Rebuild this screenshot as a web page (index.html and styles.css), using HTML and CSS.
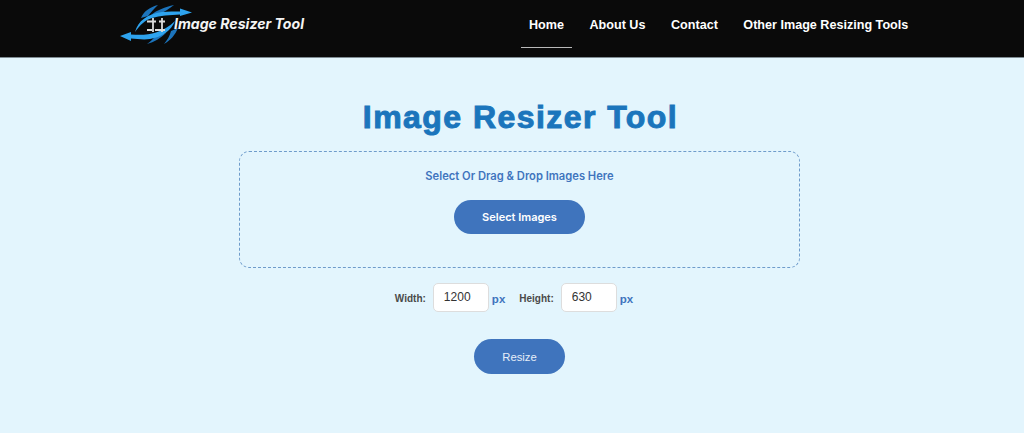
FILE: index.html
```html
<!DOCTYPE html>
<html lang="en">
<head>
<meta charset="utf-8">
<title>Image Resizer Tool</title>
<link rel="stylesheet" href="styles.css">
</head>
<body>
<header class="site-header">
  <a class="logo" href="#">
    <svg class="logo-mark" width="72" height="48" viewBox="0 0 72 48" aria-hidden="true">
      <g fill="#1c74bc">
        <path d="M21 18C24 11 30 7 38 5C34 9 31 12 28 16Z"/>
        <path d="M31 15C37 10 45 7 54 5C49 9 44 12 40 14Z"/>
        <path d="M27 44C34 42 41 38 46 33L36 36C33 39 31 41 27 44Z"/>
        <path d="M44 44C51 40 55 35 58 28L51 31C50 36 47 40 44 44Z"/>
      </g>
      <path d="M15 32C18 21 27 14 42 12C48 11.500 55 11.500 60 11.500L60 8.500L72 12.500L60 16L60 14.500C50 15 40 15.500 32 18C25 20 20 25 15 32Z" fill="#2ea3ee"/>
      <path d="M55 21C51 31 42 37 30 39C24 40 17 39 11 38.500L11 41L0 36L11 32L11 34.500C20 35 29 35 36 32.500C43 30 49 27 55 21Z" fill="#2ea3ee"/>
      <g stroke="#dcdcdc" stroke-width="1.800" fill="none">
        <path d="M27 21.500H36M39 21.500H45M27 30H32M35 30H45"/>
        <path d="M33 18V32M42 18V32"/>
      </g>
    </svg>
    <span class="logo-text">Image Resizer Tool</span>
  </a>
  <nav class="main-nav">
    <a class="nav-link is-active" href="#">Home</a>
    <a class="nav-link" href="#">About Us</a>
    <a class="nav-link" href="#">Contact</a>
    <a class="nav-link" href="#">Other Image Resizing Tools</a>
  </nav>
</header>
<main class="tool">
  <h1 class="tool-title">Image Resizer Tool</h1>
  <section class="dropzone">
    <p class="dropzone-text">Select Or Drag &amp; Drop Images Here</p>
    <button class="select-btn" type="button">Select Images</button>
  </section>
  <div class="dimensions">
    <label class="dim-label" for="w">Width:</label>
    <input class="dim-input" id="w" type="text" value="1200">
    <span class="dim-unit">px</span>
    <label class="dim-label dim-label-second" for="h">Height:</label>
    <input class="dim-input" id="h" type="text" value="630">
    <span class="dim-unit dim-unit-last">px</span>
  </div>
  <button class="resize-btn" type="button">Resize</button>
</main>
</body>
</html>
```
FILE: styles.css
```css
* { box-sizing: border-box; }
html, body { margin: 0; height: 100%; }
body {
  background: #e3f5fd;
  font-family: "Liberation Sans", Arial, sans-serif;
  overflow: hidden;
}
.site-header {
  height: 58px;
  background: #0a0a0a;
  border-bottom: 1px solid #7f8c93;
  display: flex;
  align-items: flex-start;
  padding-left: 120px;
}
.logo {
  display: flex;
  align-items: flex-start;
  text-decoration: none;
  width: 393px;
  height: 48px;
}
.logo-mark { flex: none; }
.logo-text {
  font-family: Inter, sans-serif;
  font-style: italic;
  font-weight: 700;
  font-size: 14.100px;
  line-height: 18px;
  color: #f4f4f4;
  margin-left: -18px;
  margin-top: 15px;
  white-space: nowrap;
}
.main-nav { display: flex; margin-left: 8px; }
.nav-link {
  display: block;
  height: 48px;
  padding: 17px 8px 0;
  margin-right: 9.500px;
  font-size: 12.600px;
  font-weight: 700;
  line-height: 16px;
  color: #fff;
  text-decoration: none;
  white-space: nowrap;
}
.nav-link.is-active { border-bottom: 1px solid #b9b9b9; }
.tool {
  display: flex;
  flex-direction: column;
  align-items: center;
  padding-left: 15px;
}
.tool-title {
  margin: 40px 0 0 2px;
  height: 53px;
  font-size: 32px;
  line-height: 38px;
  font-weight: 700;
  letter-spacing: 1.450px;
  color: #1b75bc;
  -webkit-text-stroke: 1px #1b75bc;
}
.dropzone {
  width: 561px;
  height: 117px;
  border: 1px dashed #6f9ccb;
  border-radius: 10px;
  display: flex;
  flex-direction: column;
  align-items: center;
}
.dropzone-text {
  margin: 17px 0 0;
  font-family: Inter, sans-serif;
  font-size: 11.200px;
  line-height: 15px;
  font-weight: 600;
  color: #3f74bd;
}
.select-btn {
  margin-top: 16px;
  width: 131px;
  height: 34px;
  border: 0;
  border-radius: 17px;
  background: #3f74bd;
  color: #fff;
  font-family: Inter, sans-serif;
  font-size: 11px;
  font-weight: 600;
}
.dimensions {
  display: flex;
  align-items: center;
  margin-top: 14px;
  height: 30px;
}
.dim-label {
  font-size: 10px;
  font-weight: 700;
  color: #4a4a4a;
  margin-right: 7px;
  margin-top: 2px;
}
.dim-label-second { margin-left: 14px; }
.dim-input {
  width: 56px;
  height: 29px;
  border: 1px solid #dddddd;
  border-radius: 5px;
  background: #fff;
  padding: 0 0 0 10px;
  font-family: "Liberation Sans", Arial, sans-serif;
  font-size: 12px;
  color: #333;
}
.dim-unit {
  margin-left: 3px;
  margin-top: 4px;
  font-size: 11.500px;
  font-weight: 700;
  color: #3f74bd;
}
.dim-unit-last { margin-right: 11px; }
.resize-btn {
  margin-top: 27px;
  width: 91px;
  height: 35px;
  border: 0;
  border-radius: 18px;
  background: #3f74bd;
  color: #e6eef8;
  font-family: "Liberation Sans", Arial, sans-serif;
  font-size: 11.300px;
}
```
